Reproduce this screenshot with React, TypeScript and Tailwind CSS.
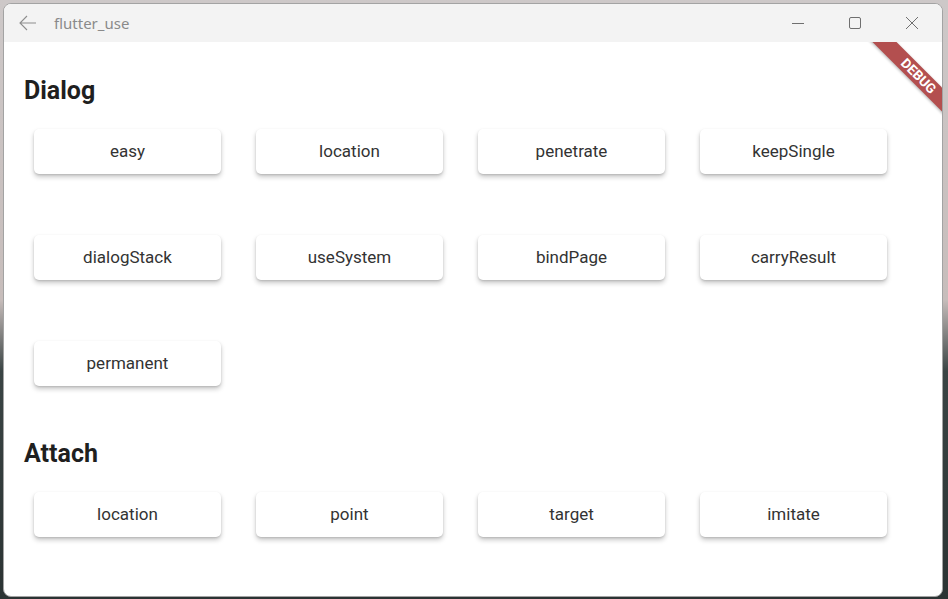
import React from 'react';

const dialogItems = ['easy', 'location', 'penetrate', 'keepSingle', 'dialogStack', 'useSystem', 'bindPage', 'carryResult', 'permanent'];
const attachItems = ['location', 'point', 'target', 'imitate'];

const ActionButton: React.FC<{ label: string }> = ({ label }) => (
  <button className="h-[45px] w-[187px] rounded-[5px] bg-white text-[17px] text-[#333333] shadow-[0_1px_2px_rgba(0,0,0,0.12),0_3px_5px_rgba(0,0,0,0.22)]">
    {label}
  </button>
);

const Section: React.FC<{ title: string; items: string[]; className?: string }> = ({ title, items, className }) => (
  <div className={className}>
    <h2 className="text-[25px] leading-[30px] font-bold text-[#1f1f1f]">{title}</h2>
    <div className="ml-[10px] mt-[23px] grid grid-cols-[repeat(4,187px)] gap-x-[35px] gap-y-[61px]">
      {items.map((item, i) => (
        <ActionButton key={i} label={item} />
      ))}
    </div>
  </div>
);

export default function App() {
  return (
    <div className="h-[599px] w-[948px] overflow-hidden bg-[linear-gradient(180deg,#cdc8c8_0%,#c7bdbb_50%,#3a4444_62%,#2b3333_100%)] pl-[3px] pt-[3px]">
      <div className="flex h-[594px] w-[940px] flex-col overflow-hidden rounded-[8px] border border-[#a3a3a3] bg-white">
        {/* title bar */}
        <div className="flex h-[38px] shrink-0 items-center bg-[#f3f3f3] font-['Noto_Sans',sans-serif]">
          <svg width="18" height="16" viewBox="0 0 18 16" className="ml-[15px]" fill="none" stroke="#8e8e8e" strokeWidth="1.1">
            <path d="M1 8h16M8 1L1 8l7 7" />
          </svg>
          <span className="ml-[17px] text-[15px] text-[#8a8a8a]">flutter_use</span>
          <div className="ml-auto flex items-center">
            <div className="flex w-[56px] justify-center">
              <svg width="14" height="14" viewBox="0 0 14 14" fill="none" stroke="#6f6f6f" strokeWidth="1">
                <path d="M1 7.5h12" />
              </svg>
            </div>
            <div className="flex w-[58px] justify-center">
              <svg width="14" height="14" viewBox="0 0 14 14" fill="none" stroke="#6f6f6f" strokeWidth="1">
                <rect x="1.5" y="1.5" width="11" height="11" rx="1.5" />
              </svg>
            </div>
            <div className="mr-[2px] flex w-[56px] justify-center">
              <svg width="14" height="14" viewBox="0 0 14 14" fill="none" stroke="#6f6f6f" strokeWidth="1">
                <path d="M1 1l12 12M13 1L1 13" />
              </svg>
            </div>
          </div>
        </div>
        {/* content */}
        <div className="relative flex-1 pl-[20px] font-['Roboto',sans-serif]">
          <Section title="Dialog" items={dialogItems} className="pt-[34px]" />
          <Section title="Attach" items={attachItems} className="pt-[53px]" />
          {/* debug banner */}
          <div className="absolute right-0 top-0 h-[110px] w-[110px] overflow-hidden">
            <div className="absolute left-[3px] top-[22px] flex h-[17px] w-[160px] rotate-45 items-center justify-center bg-[#b34f4f] pl-[10px] shadow-[0_1px_3px_rgba(0,0,0,0.3)]">
              <span className="text-[13.5px] font-bold leading-none text-white">DEBUG</span>
            </div>
          </div>
        </div>
      </div>
    </div>
  );
}
